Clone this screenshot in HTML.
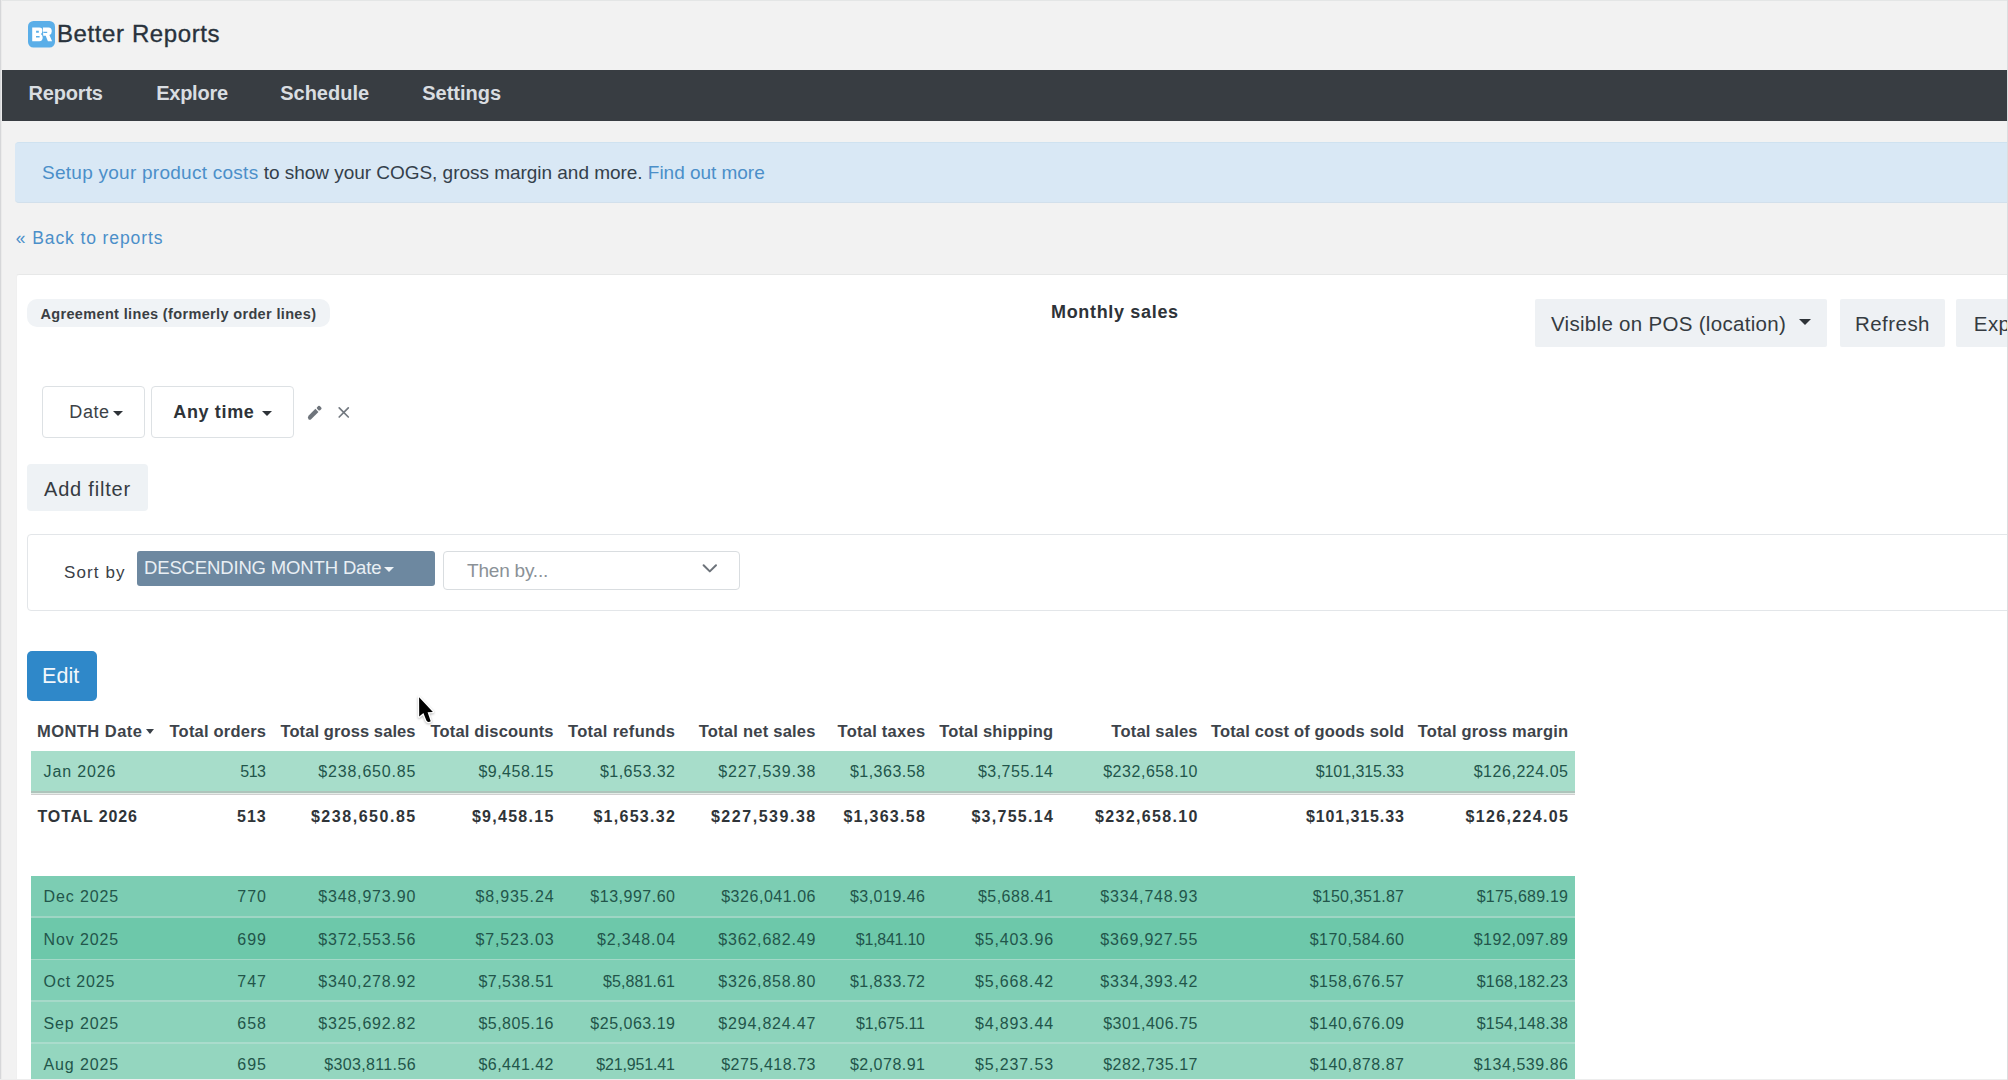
<!DOCTYPE html>
<html><head><meta charset="utf-8">
<style>
*{box-sizing:border-box;margin:0;padding:0}
html,body{width:2008px;height:1080px;overflow:hidden;background:#f2f2f2;font-family:"Liberation Sans",sans-serif}
.a{position:absolute}
.t{position:absolute;line-height:1;white-space:nowrap}
.b{font-weight:700}
.link{color:#4b8fc9}
.nav .t{color:#d9dde1;font-size:20px;font-weight:700;top:82.8px}
.hd{font-size:16.5px;font-weight:700;color:#3d434a;top:722.9px}
.row{position:absolute;left:31px;width:1544px;height:42px}
.c{position:absolute;line-height:1;white-space:nowrap;font-size:16px;color:#2b4a41;letter-spacing:0.5px;text-align:right}
.tot .c{font-weight:700;color:#2f3438;font-size:16px}
</style></head>
<body>
<!-- edges -->
<div class="a" style="left:0;top:0;width:2008px;height:1px;background:#e4e6e6"></div>
<div class="a" style="left:0;top:0;width:1px;height:1080px;background:#d6d7d9"></div>
<div class="a" style="left:1px;top:0;width:1px;height:1080px;background:#ebebeb"></div>


<!-- logo -->
<svg class="a" style="left:28px;top:21px" width="27" height="27" viewBox="0 0 27 27"><rect x="0" y="0" width="27" height="26.5" rx="5.5" fill="#5aaee8"/>
<path fill="#fff" fill-rule="evenodd" d="M4.2 6.4 H11.4 Q14.4 6.4 14.4 9.6 Q14.4 12 12.9 12.9 Q14.7 13.9 14.7 16.6 Q14.7 20.2 11.4 20.2 H4.2 Z M8.1 9.8 H10.8 V11.7 H8.1 Z M8 14.9 H11.6 V16.5 H8 Z"/>
<path fill="#fff" fill-rule="evenodd" d="M14.9 6.4 H20.6 Q23.8 6.4 23.8 10.2 Q23.8 13.1 21.4 14.1 L24.1 20.2 H19.9 L17.7 14.8 H15.2 Z M15.4 10.7 H19.2 V12.1 H15.4 Z"/>
</svg>
<div class="t" style="left:57px;top:22.1px;font-size:24px;color:#29323c;letter-spacing:0.6px;-webkit-text-stroke:0.35px #29323c">Better Reports</div>

<!-- nav -->
<div class="a nav" style="left:2px;top:70px;width:2006px;height:51px;background:#383d42">
</div>
<div class="nav">
<div class="t" style="left:28.6px;letter-spacing:-0.2px">Reports</div>
<div class="t" style="left:156.2px;letter-spacing:-0.25px">Explore</div>
<div class="t" style="left:280.2px">Schedule</div>
<div class="t" style="left:422.2px">Settings</div>
</div>

<!-- banner -->
<div class="a" style="left:15px;top:142px;width:1993px;height:60.6px;background:#d9e8f5;border-top:1px solid #cfe2f0;border-bottom:1px solid #d2e0ec;border-radius:4px 0 0 4px"></div>
<div class="t" style="left:42px;top:162.9px;font-size:19px;color:#34404b;letter-spacing:-0.03px"><span class="link" style="letter-spacing:0.26px">Setup your product costs</span> to show your COGS, gross margin and more. <span class="link">Find out more</span></div>

<div class="t link" style="left:15.8px;top:229.8px;font-size:17.5px;letter-spacing:0.9px">« Back to reports</div>

<!-- card -->
<div class="a" style="left:16px;top:273.5px;width:1992px;height:806.5px;background:#fff;border-top:1px solid #e7e8e8;border-left:1px solid #f0f0f0;border-radius:3px 0 0 0"></div>

<div class="a" style="left:26.5px;top:299.3px;width:303px;height:27.7px;border-radius:10px;background:#f0f3f6"></div>
<div class="t b" style="left:40.4px;top:306.5px;font-size:14.5px;color:#3a3f44;letter-spacing:0.35px">Agreement lines (formerly order lines)</div>

<div class="t b" style="left:1051px;top:303.2px;font-size:18px;color:#2e3338;letter-spacing:0.67px">Monthly sales</div>

<div class="a" style="left:1535px;top:299px;width:292px;height:48px;border-radius:2px;background:#eef1f4"></div>
<div class="t" style="left:1551px;top:313.6px;font-size:20.5px;color:#353b41;letter-spacing:0.3px">Visible on POS (location)</div>
<div class="a" style="left:1799px;top:319px;width:0;height:0;border-left:6px solid transparent;border-right:6px solid transparent;border-top:6px solid #2e3338"></div>
<div class="a" style="left:1840px;top:299px;width:105px;height:48px;border-radius:2px;background:#eef1f4"></div>
<div class="t" style="left:1855px;top:313.6px;font-size:20.5px;color:#353b41;letter-spacing:0.45px">Refresh</div>
<div class="a" style="left:1956px;top:299px;width:60px;height:48px;border-radius:2px;background:#eef1f4"></div>
<div class="t" style="left:1973.8px;top:313.6px;font-size:20.5px;color:#353b41;letter-spacing:0.45px">Exp</div>

<!-- filters -->
<div class="a" style="left:42px;top:386px;width:103px;height:52px;border:1px solid #dde1e4;border-radius:4px"></div>
<div class="t" style="left:69.3px;top:403.1px;font-size:18px;color:#3c4247;letter-spacing:0.6px">Date</div>
<div class="a" style="left:112.5px;top:411px;width:0;height:0;border-left:5px solid transparent;border-right:5px solid transparent;border-top:5px solid #2e3338"></div>
<div class="a" style="left:151px;top:386px;width:143px;height:52px;border:1px solid #dde1e4;border-radius:4px"></div>
<div class="t b" style="left:173.3px;top:403.1px;font-size:18px;color:#2e3338;letter-spacing:0.64px">Any time</div>
<div class="a" style="left:262px;top:411px;width:0;height:0;border-left:5px solid transparent;border-right:5px solid transparent;border-top:5px solid #2e3338"></div>
<svg class="a" style="left:300px;top:398px" width="30" height="30" viewBox="0 0 30 30"><g transform="translate(8.3,21) rotate(-45)"><path d="M0 0.2 Q0.3 -2.1 2.8 -2.15 H12.2 V2.15 H1.5 Q0 2 0 0.2 Z" fill="#6e747b"/><rect x="13.4" y="-2.15" width="3.9" height="4.3" rx="1.2" fill="#6e747b"/></g></svg>
<svg class="a" style="left:330px;top:398px" width="28" height="28" viewBox="0 0 28 28"><path d="M9.2 9.9 L18.3 19 M18.3 9.9 L9.2 19" stroke="#737980" stroke-width="1.7" stroke-linecap="round"/></svg>

<div class="a" style="left:26.5px;top:464px;width:121px;height:47px;border-radius:4px;background:#eef2f5"></div>
<div class="t" style="left:44px;top:479.2px;font-size:20px;color:#353b41;letter-spacing:0.8px">Add filter</div>

<!-- sort -->
<div class="a" style="left:27px;top:534px;width:1990px;height:77px;border:1px solid #e3e6e9;border-radius:4px"></div>
<div class="t" style="left:64px;top:564.2px;font-size:17px;color:#3a4046;letter-spacing:1.1px">Sort by</div>
<div class="a" style="left:137px;top:551px;width:298px;height:35px;border-radius:3px;background:#6d88a0"></div>
<div class="t" style="left:144px;top:559px;font-size:18.5px;color:#e9eff4;letter-spacing:-0.15px">DESCENDING MONTH Date</div>
<div class="a" style="left:384.2px;top:567.2px;width:0;height:0;border-left:5.1px solid transparent;border-right:5.1px solid transparent;border-top:5.2px solid #eef3f7"></div>
<div class="a" style="left:443px;top:551px;width:297px;height:39px;border:1px solid #d9dde0;border-radius:4px;background:#fff"></div>
<div class="t" style="left:467px;top:561px;font-size:19px;color:#8b9197;letter-spacing:-0.2px">Then by...</div>
<svg class="a" style="left:690px;top:555px" width="40" height="30" viewBox="0 0 40 30"><path d="M13.6 10.2 L19.8 16.4 L26 10.2" fill="none" stroke="#6d737a" stroke-width="2" stroke-linecap="round" stroke-linejoin="round"/></svg>

<!-- edit -->
<div class="a" style="left:26.5px;top:651px;width:70.5px;height:49.5px;border-radius:5px;background:#2f88c9"></div>
<div class="t" style="left:42.1px;top:665.7px;font-size:21.5px;color:#f2f7fb">Edit</div>

<!-- table header -->
<div class="t hd" style="left:37px;letter-spacing:0.45px">MONTH Date</div>
<div class="a" style="left:145.5px;top:729px;width:0;height:0;border-left:4.5px solid transparent;border-right:4.5px solid transparent;border-top:5px solid #3a4047"></div>
<div class="t hd" style="right:1741.8px;letter-spacing:0.21px">Total orders</div>
<div class="t hd" style="right:1592.4px;letter-spacing:0.09px">Total gross sales</div>
<div class="t hd" style="right:1454.3px;letter-spacing:0.16px">Total discounts</div>
<div class="t hd" style="right:1332.7px;letter-spacing:0.31px">Total refunds</div>
<div class="t hd" style="right:1192.3px;letter-spacing:0.24px">Total net sales</div>
<div class="t hd" style="right:1082.7px;letter-spacing:0.25px">Total taxes</div>
<div class="t hd" style="right:954.8px;letter-spacing:0.18px">Total shipping</div>
<div class="t hd" style="right:810.3px;letter-spacing:0.21px">Total sales</div>
<div class="t hd" style="right:603.8px;letter-spacing:0.16px">Total cost of goods sold</div>
<div class="t hd" style="right:439.8px;letter-spacing:0.18px">Total gross margin</div>


<div class="a" style="left:31px;top:751px;width:1544px;height:40px;background:#a7ddca"></div>
<div class="t" style="left:43.6px;top:763.9px;font-size:16px;color:#22554a;letter-spacing:0.85px">Jan 2026</div>
<div class="t" style="right:1742.6px;top:763.9px;font-size:16px;color:#22554a;letter-spacing:-0.55px">513</div>
<div class="t" style="right:1591.7px;top:763.9px;font-size:16px;color:#22554a;letter-spacing:0.83px">$238,650.85</div>
<div class="t" style="right:1454.0px;top:763.9px;font-size:16px;color:#22554a;letter-spacing:0.49px">$9,458.15</div>
<div class="t" style="right:1332.5px;top:763.9px;font-size:16px;color:#22554a;letter-spacing:0.49px">$1,653.32</div>
<div class="t" style="right:1191.7px;top:763.9px;font-size:16px;color:#22554a;letter-spacing:0.83px">$227,539.38</div>
<div class="t" style="right:1082.5px;top:763.9px;font-size:16px;color:#22554a;letter-spacing:0.49px">$1,363.58</div>
<div class="t" style="right:954.5px;top:763.9px;font-size:16px;color:#22554a;letter-spacing:0.49px">$3,755.14</div>
<div class="t" style="right:810.0px;top:763.9px;font-size:16px;color:#22554a;letter-spacing:0.53px">$232,658.10</div>
<div class="t" style="right:604.1px;top:763.9px;font-size:16px;color:#22554a;letter-spacing:-0.07px">$101,315.33</div>
<div class="t" style="right:439.5px;top:763.9px;font-size:16px;color:#22554a;letter-spacing:0.53px">$126,224.05</div>
<div class="t b" style="left:37.5px;top:808.9px;font-size:16px;color:#2f3438;letter-spacing:0.86px">TOTAL 2026</div>
<div class="t b" style="right:1741.2px;top:808.9px;font-size:16px;color:#2f3438;letter-spacing:1.05px">513</div>
<div class="t b" style="right:1591.2px;top:808.9px;font-size:16px;color:#2f3438;letter-spacing:1.54px">$238,650.85</div>
<div class="t b" style="right:1453.4px;top:808.9px;font-size:16px;color:#2f3438;letter-spacing:1.28px">$9,458.15</div>
<div class="t b" style="right:1331.9px;top:808.9px;font-size:16px;color:#2f3438;letter-spacing:1.28px">$1,653.32</div>
<div class="t b" style="right:1191.2px;top:808.9px;font-size:16px;color:#2f3438;letter-spacing:1.54px">$227,539.38</div>
<div class="t b" style="right:1081.9px;top:808.9px;font-size:16px;color:#2f3438;letter-spacing:1.28px">$1,363.58</div>
<div class="t b" style="right:953.9px;top:808.9px;font-size:16px;color:#2f3438;letter-spacing:1.28px">$3,755.14</div>
<div class="t b" style="right:809.4px;top:808.9px;font-size:16px;color:#2f3438;letter-spacing:1.32px">$232,658.10</div>
<div class="t b" style="right:603.3px;top:808.9px;font-size:16px;color:#2f3438;letter-spacing:0.88px">$101,315.33</div>
<div class="t b" style="right:438.9px;top:808.9px;font-size:16px;color:#2f3438;letter-spacing:1.32px">$126,224.05</div>
<div class="a" style="left:31px;top:876px;width:1544px;height:41px;background:#7ccdb3"></div>
<div class="t" style="left:43.6px;top:889.4px;font-size:16px;color:#22554a;letter-spacing:0.85px">Dec 2025</div>
<div class="t" style="right:1741.1px;top:889.4px;font-size:16px;color:#22554a;letter-spacing:0.95px">770</div>
<div class="t" style="right:1591.7px;top:889.4px;font-size:16px;color:#22554a;letter-spacing:0.83px">$348,973.90</div>
<div class="t" style="right:1453.6px;top:889.4px;font-size:16px;color:#22554a;letter-spacing:0.86px">$8,935.24</div>
<div class="t" style="right:1332.5px;top:889.4px;font-size:16px;color:#22554a;letter-spacing:0.51px">$13,997.60</div>
<div class="t" style="right:1192.0px;top:889.4px;font-size:16px;color:#22554a;letter-spacing:0.53px">$326,041.06</div>
<div class="t" style="right:1082.5px;top:889.4px;font-size:16px;color:#22554a;letter-spacing:0.49px">$3,019.46</div>
<div class="t" style="right:954.5px;top:889.4px;font-size:16px;color:#22554a;letter-spacing:0.49px">$5,688.41</div>
<div class="t" style="right:809.7px;top:889.4px;font-size:16px;color:#22554a;letter-spacing:0.83px">$334,748.93</div>
<div class="t" style="right:603.8px;top:889.4px;font-size:16px;color:#22554a;letter-spacing:0.23px">$150,351.87</div>
<div class="t" style="right:439.8px;top:889.4px;font-size:16px;color:#22554a;letter-spacing:0.23px">$175,689.19</div>
<div class="a" style="left:31px;top:917.5px;width:1544px;height:41.5px;background:#6dc8aa"></div>
<div class="t" style="left:43.6px;top:931.6px;font-size:16px;color:#22554a;letter-spacing:0.85px">Nov 2025</div>
<div class="t" style="right:1741.1px;top:931.6px;font-size:16px;color:#22554a;letter-spacing:0.95px">699</div>
<div class="t" style="right:1591.7px;top:931.6px;font-size:16px;color:#22554a;letter-spacing:0.83px">$372,553.56</div>
<div class="t" style="right:1453.6px;top:931.6px;font-size:16px;color:#22554a;letter-spacing:0.86px">$7,523.03</div>
<div class="t" style="right:1332.1px;top:931.6px;font-size:16px;color:#22554a;letter-spacing:0.86px">$2,348.04</div>
<div class="t" style="right:1191.7px;top:931.6px;font-size:16px;color:#22554a;letter-spacing:0.83px">$362,682.49</div>
<div class="t" style="right:1083.3px;top:931.6px;font-size:16px;color:#22554a;letter-spacing:-0.26px">$1,841.10</div>
<div class="t" style="right:954.1px;top:931.6px;font-size:16px;color:#22554a;letter-spacing:0.86px">$5,403.96</div>
<div class="t" style="right:809.7px;top:931.6px;font-size:16px;color:#22554a;letter-spacing:0.83px">$369,927.55</div>
<div class="t" style="right:603.5px;top:931.6px;font-size:16px;color:#22554a;letter-spacing:0.53px">$170,584.60</div>
<div class="t" style="right:439.5px;top:931.6px;font-size:16px;color:#22554a;letter-spacing:0.53px">$192,097.89</div>
<div class="a" style="left:31px;top:959px;width:1544px;height:42px;background:#7fcfb5"></div>
<div class="t" style="left:43.6px;top:973.6px;font-size:16px;color:#22554a;letter-spacing:0.85px">Oct 2025</div>
<div class="t" style="right:1741.1px;top:973.6px;font-size:16px;color:#22554a;letter-spacing:0.95px">747</div>
<div class="t" style="right:1591.7px;top:973.6px;font-size:16px;color:#22554a;letter-spacing:0.83px">$340,278.92</div>
<div class="t" style="right:1454.0px;top:973.6px;font-size:16px;color:#22554a;letter-spacing:0.49px">$7,538.51</div>
<div class="t" style="right:1332.9px;top:973.6px;font-size:16px;color:#22554a;letter-spacing:0.11px">$5,881.61</div>
<div class="t" style="right:1191.7px;top:973.6px;font-size:16px;color:#22554a;letter-spacing:0.83px">$326,858.80</div>
<div class="t" style="right:1082.5px;top:973.6px;font-size:16px;color:#22554a;letter-spacing:0.49px">$1,833.72</div>
<div class="t" style="right:954.1px;top:973.6px;font-size:16px;color:#22554a;letter-spacing:0.86px">$5,668.42</div>
<div class="t" style="right:809.7px;top:973.6px;font-size:16px;color:#22554a;letter-spacing:0.83px">$334,393.42</div>
<div class="t" style="right:603.5px;top:973.6px;font-size:16px;color:#22554a;letter-spacing:0.53px">$158,676.57</div>
<div class="t" style="right:439.8px;top:973.6px;font-size:16px;color:#22554a;letter-spacing:0.23px">$168,182.23</div>
<div class="a" style="left:31px;top:1001px;width:1544px;height:41.5px;background:#8cd3bb"></div>
<div class="t" style="left:43.6px;top:1015.6px;font-size:16px;color:#22554a;letter-spacing:0.85px">Sep 2025</div>
<div class="t" style="right:1741.1px;top:1015.6px;font-size:16px;color:#22554a;letter-spacing:0.95px">658</div>
<div class="t" style="right:1591.7px;top:1015.6px;font-size:16px;color:#22554a;letter-spacing:0.83px">$325,692.82</div>
<div class="t" style="right:1454.0px;top:1015.6px;font-size:16px;color:#22554a;letter-spacing:0.49px">$5,805.16</div>
<div class="t" style="right:1332.5px;top:1015.6px;font-size:16px;color:#22554a;letter-spacing:0.51px">$25,063.19</div>
<div class="t" style="right:1191.7px;top:1015.6px;font-size:16px;color:#22554a;letter-spacing:0.83px">$294,824.47</div>
<div class="t" style="right:1083.1px;top:1015.6px;font-size:16px;color:#22554a;letter-spacing:-0.11px">$1,675.11</div>
<div class="t" style="right:954.1px;top:1015.6px;font-size:16px;color:#22554a;letter-spacing:0.86px">$4,893.44</div>
<div class="t" style="right:810.0px;top:1015.6px;font-size:16px;color:#22554a;letter-spacing:0.53px">$301,406.75</div>
<div class="t" style="right:603.5px;top:1015.6px;font-size:16px;color:#22554a;letter-spacing:0.53px">$140,676.09</div>
<div class="t" style="right:439.8px;top:1015.6px;font-size:16px;color:#22554a;letter-spacing:0.23px">$154,148.38</div>
<div class="a" style="left:31px;top:1042.5px;width:1544px;height:38px;background:#94d6bf"></div>
<div class="t" style="left:43.6px;top:1056.9px;font-size:16px;color:#22554a;letter-spacing:0.85px">Aug 2025</div>
<div class="t" style="right:1741.1px;top:1056.9px;font-size:16px;color:#22554a;letter-spacing:0.95px">695</div>
<div class="t" style="right:1592.1px;top:1056.9px;font-size:16px;color:#22554a;letter-spacing:0.35px">$303,811.56</div>
<div class="t" style="right:1454.0px;top:1056.9px;font-size:16px;color:#22554a;letter-spacing:0.49px">$6,441.42</div>
<div class="t" style="right:1333.2px;top:1056.9px;font-size:16px;color:#22554a;letter-spacing:-0.15px">$21,951.41</div>
<div class="t" style="right:1192.0px;top:1056.9px;font-size:16px;color:#22554a;letter-spacing:0.53px">$275,418.73</div>
<div class="t" style="right:1082.5px;top:1056.9px;font-size:16px;color:#22554a;letter-spacing:0.49px">$2,078.91</div>
<div class="t" style="right:954.1px;top:1056.9px;font-size:16px;color:#22554a;letter-spacing:0.86px">$5,237.53</div>
<div class="t" style="right:810.0px;top:1056.9px;font-size:16px;color:#22554a;letter-spacing:0.53px">$282,735.17</div>
<div class="t" style="right:603.5px;top:1056.9px;font-size:16px;color:#22554a;letter-spacing:0.53px">$140,878.87</div>
<div class="t" style="right:439.5px;top:1056.9px;font-size:16px;color:#22554a;letter-spacing:0.53px">$134,539.86</div>
<div class="a" style="left:31px;top:791px;width:1544px;height:1.75px;background:#aec4bb"></div>
<div class="a" style="left:31px;top:792.75px;width:1544px;height:1px;background:#e3ece7"></div>
<div class="a" style="left:31px;top:793.75px;width:1544px;height:1.25px;background:#cfcfcf"></div>
<div class="a" style="left:31px;top:916px;width:1544px;height:1.6px;background:#9fd5c4"></div>
<div class="a" style="left:31px;top:958.5px;width:1544px;height:1.6px;background:#a3d8c7"></div>
<div class="a" style="left:31px;top:1000.3px;width:1544px;height:1.6px;background:#a6d9c9"></div>
<div class="a" style="left:31px;top:1042.2px;width:1544px;height:1.6px;background:#aadccc"></div>


<!-- cursor -->
<svg class="a" style="left:410px;top:690px;filter:drop-shadow(0 1px 1.2px rgba(0,0,0,0.28))" width="30" height="38" viewBox="0 0 30 38"><path d="M9.1 7.2 L9.2 26.6 L13.4 22.9 L16.4 30.4 Q18.4 33.2 20.7 31.2 L17.6 22.2 L22.9 21.9 Z" fill="#000" stroke="#fff" stroke-width="2.6" stroke-linejoin="round" paint-order="stroke"/></svg>

<div class="a" style="left:2007px;top:0;width:1px;height:1080px;background:#dcdddf"></div>
<div class="a" style="left:0;top:1079px;width:2007px;height:1px;background:#ededed"></div>
</body></html>
